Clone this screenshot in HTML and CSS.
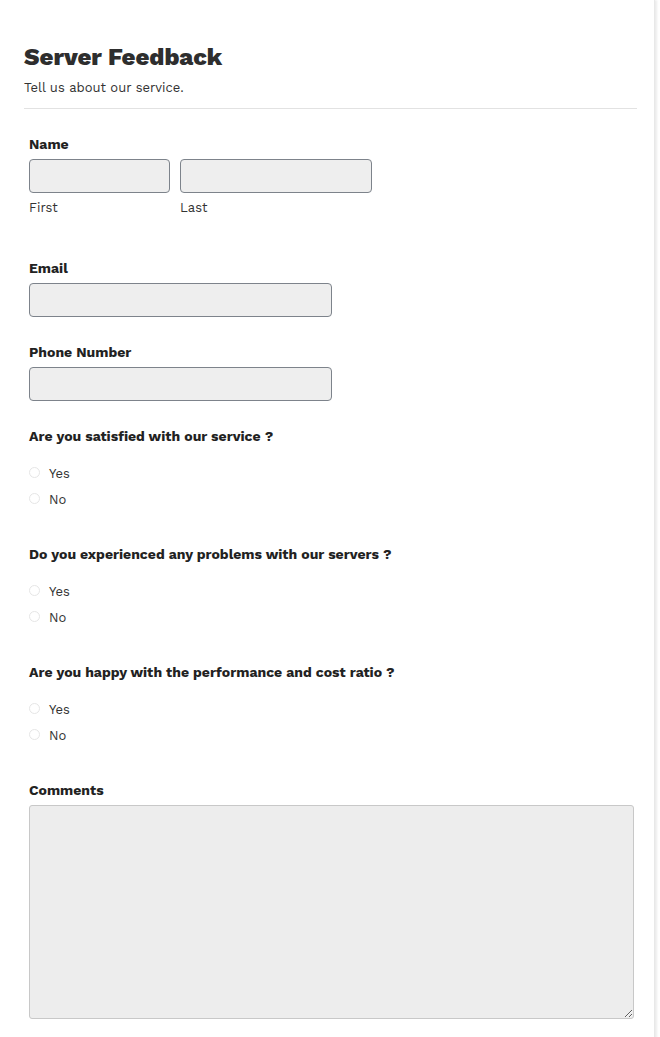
FILE: index.html
```html
<!DOCTYPE html>
<html>
<head>
<meta charset="utf-8">
<link rel="stylesheet" href="styles.css">
</head>
<body>
<div class="page">
  <header class="head">
    <h1 class="title">Server Feedback</h1>
    <p class="subtitle">Tell us about our service.</p>
  </header>
  <form class="form">
    <div class="field field-name">
      <div class="label">Name</div>
      <div class="name-row">
        <div class="name-col first">
          <input class="input" type="text">
          <div class="sublabel">First</div>
        </div>
        <div class="name-col last">
          <input class="input" type="text">
          <div class="sublabel">Last</div>
        </div>
      </div>
    </div>
    <div class="field">
      <div class="label">Email</div>
      <input class="input wide" type="text">
    </div>
    <div class="field">
      <div class="label">Phone Number</div>
      <input class="input wide" type="text">
    </div>
    <div class="field">
      <div class="label">Are you satisfied with our service ?</div>
      <div class="options">
        <div class="option"><span class="radio"></span><span>Yes</span></div>
        <div class="option"><span class="radio"></span><span>No</span></div>
      </div>
    </div>
    <div class="field q">
      <div class="label">Do you experienced any problems with our servers ?</div>
      <div class="options">
        <div class="option"><span class="radio"></span><span>Yes</span></div>
        <div class="option"><span class="radio"></span><span>No</span></div>
      </div>
    </div>
    <div class="field q">
      <div class="label">Are you happy with the performance and cost ratio ?</div>
      <div class="options">
        <div class="option"><span class="radio"></span><span>Yes</span></div>
        <div class="option"><span class="radio"></span><span>No</span></div>
      </div>
    </div>
    <div class="field q">
      <div class="label">Comments</div>
      <textarea class="textarea"></textarea>
    </div>
  </form>
</div>
</body>
</html>
```

FILE: styles.css
```css
html, body {
  margin: 0;
  padding: 0;
  background: #ffffff;
}
body {
  font-family: "Work Sans", Inter, "Liberation Sans", sans-serif;
  color: #333333;
}
.page {
  width: 655px;
  min-height: 1037px;
  box-sizing: border-box;
  padding: 0 17px 0 24px;
  box-shadow: 2px 0 2px rgba(0, 0, 0, 0.08);
  border-right: 1px solid #e8e8e8;
}
.head {
  padding-top: 42px;
  border-bottom: 1px solid #e2e2e2;
  padding-bottom: 11px;
}
.title {
  margin: 0;
  font-size: 24px;
  line-height: 30px;
  font-weight: 800;
  color: #2e2e2e;
  letter-spacing: 0;
}
.subtitle {
  margin: 7px 0 0 0;
  font-size: 13px;
  line-height: 18px;
  color: #333;
}
.form {
  padding: 25px 0 0 5px;
  display: flex;
  flex-direction: column;
}
.field {
  display: flex;
  flex-direction: column;
  margin-bottom: 25px;
}
.field-name {
  margin-bottom: 40px;
}
.field.q {
  margin-top: 7px;
}
.label {
  font-size: 14px;
  line-height: 20px;
  font-weight: 700;
  color: #222;
  margin: 0 0 6px 0;
  padding: 0;
}
.field .label + * {
  margin-top: -1px;
}
.name-row {
  display: flex;
  gap: 10px;
}
.name-col.first { width: 141px; }
.name-col.last { width: 192px; }
.input {
  display: block;
  width: 100%;
  height: 34px;
  box-sizing: border-box;
  background: #eeeeee;
  border: 1px solid #7d838b;
  border-radius: 4px;
  margin: 0;
  padding: 0 8px;
}
.input.wide { width: 303px; }
.sublabel {
  font-size: 13px;
  line-height: 20px;
  margin-top: 5px;
  color: #333;
}
.options {
  margin-top: 8px !important;
  display: flex;
  flex-direction: column;
}
.option {
  display: flex;
  align-items: center;
  height: 26px;
  font-size: 13px;
  color: #333;
}
.radio {
  width: 9px;
  height: 9px;
  border: 1px solid #e6e6e6;
  border-radius: 50%;
  background: #fff;
  margin: 0 9px 0 0;
  position: relative;
  top: -1px;
}
.textarea {
  display: block;
  width: 605px;
  height: 214px;
  box-sizing: border-box;
  background: #ededed;
  border: 1px solid #c8c8c8;
  border-radius: 3px;
  margin: 0;
  resize: both;
}
```
